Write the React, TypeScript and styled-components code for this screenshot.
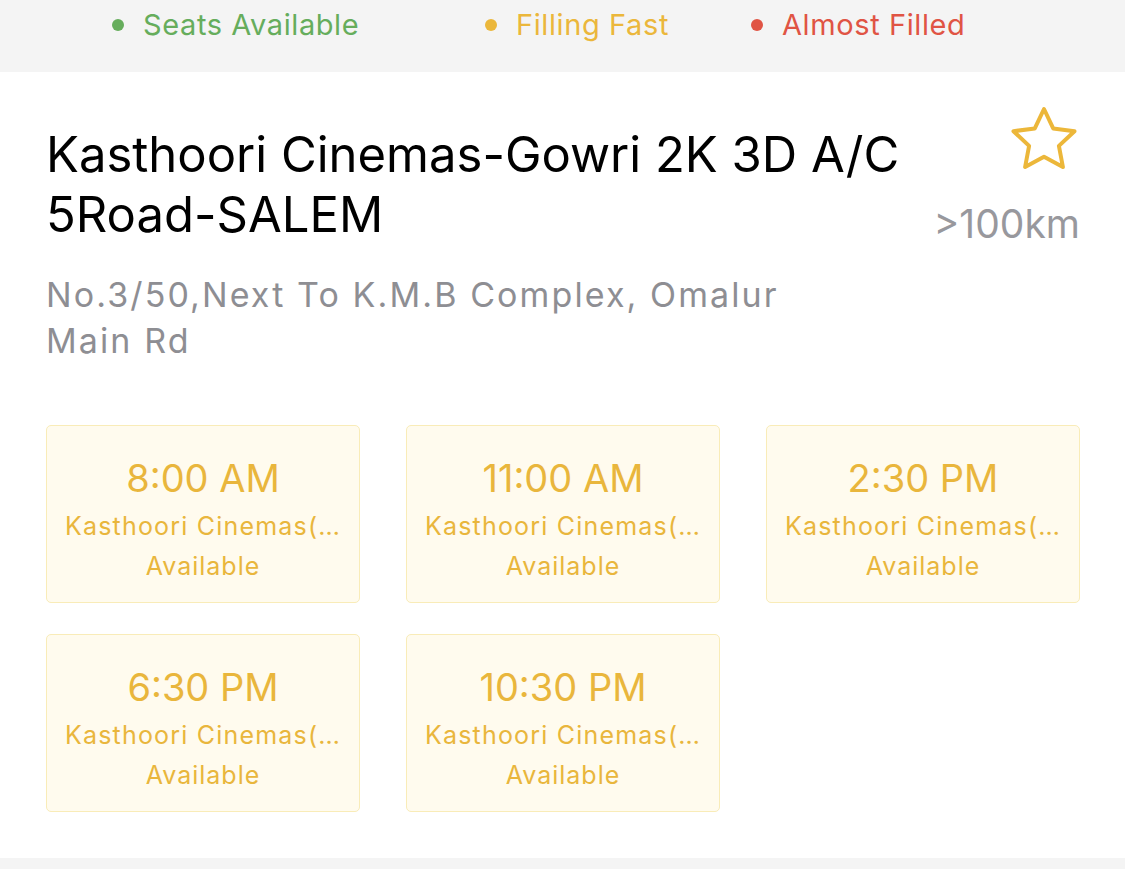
import React from "react";
import styled, { createGlobalStyle } from "styled-components";

const GlobalStyle = createGlobalStyle`
  html, body {
    margin: 0;
    padding: 0;
    background: #f4f4f4;
  }
  body {
    font-family: Inter, "Noto Sans", sans-serif;
  }
`;

const Page = styled.div`
  width: 1125px;
  height: 869px;
  overflow: hidden;
  background: #f4f4f4;
  display: flex;
  flex-direction: column;
`;

const Legend = styled.div`
  height: 72px;
  flex-shrink: 0;
  display: flex;
  align-items: flex-start;
  padding: 7px 0 0 112px;
  box-sizing: border-box;
`;

const LegendItem = styled.div<{ $color: string; $width: number }>`
  display: flex;
  align-items: center;
  width: ${(p) => p.$width}px;
  color: ${(p) => p.$color};
  font-size: 29px;
  line-height: 36px;
  letter-spacing: 0.6px;
  &::before {
    content: "";
    flex-shrink: 0;
    width: 12px;
    height: 12px;
    border-radius: 50%;
    background: ${(p) => p.$color};
    margin-right: 19px;
  }
`;

const Card = styled.div`
  background: #ffffff;
  height: 786px;
  flex-shrink: 0;
  padding: 33px 45px 0 46px;
  box-sizing: border-box;
`;

const Header = styled.div`
  display: flex;
  justify-content: space-between;
  align-items: flex-start;
`;

const Title = styled.h1`
  margin: 20px 0 0;
  font-size: 49px;
  font-weight: 400;
  line-height: 60px;
  color: #000;
  width: 880px;
`;

const Side = styled.div`
  display: flex;
  flex-direction: column;
  align-items: flex-end;
`;

const Distance = styled.div`
  margin-top: 26px;
  font-size: 39px;
  color: #98989d;
  line-height: 46px;
`;

const Address = styled.p`
  margin: 25px 0 0;
  font-size: 34px;
  line-height: 46px;
  color: #8e8e93;
  width: 760px;
  letter-spacing: 2.1px;
`;

const Grid = styled.div`
  margin-top: 61px;
  display: grid;
  grid-template-columns: repeat(3, 314px);
  column-gap: 46px;
  row-gap: 31px;
`;

const Slot = styled.div`
  height: 178px;
  box-sizing: border-box;
  background: #fffbee;
  border: 1.5px solid #f9ecb8;
  border-radius: 5px;
  display: flex;
  flex-direction: column;
  align-items: center;
  padding-top: 30px;
  color: #e9b63c;
`;

const Time = styled.div`
  font-size: 38px;
  line-height: 44px;
`;

const Place = styled.div`
  margin-top: 8px;
  font-size: 25px;
  line-height: 36px;
  white-space: nowrap;
  letter-spacing: 1.2px;
`;

const Status = styled.div`
  margin-top: 3px;
  font-size: 25px;
  line-height: 38px;
  letter-spacing: 1px;
`;

const StarIcon = () => (
  <svg width="72" height="70" viewBox="0 0 72 70" fill="none">
    <path
      d="M36 4 L45.2 23.4 L66.5 26.2 L50.9 40.9 L54.9 62 L36 51.7 L17.1 62 L21.1 40.9 L5.5 26.2 L26.8 23.4 Z"
      stroke="#ecb73a"
      strokeWidth="4"
      strokeLinejoin="round"
    />
  </svg>
);

const legend = [
  { label: "Seats Available", color: "#66ad5c", width: 373 },
  { label: "Filling Fast", color: "#ebb73b", width: 266 },
  { label: "Almost Filled", color: "#e05444", width: 260 },
];

const times = ["8:00 AM", "11:00 AM", "2:30 PM", "6:30 PM", "10:30 PM"];

export default function App() {
  return (
    <>
      <GlobalStyle />
      <Page>
        <Legend>
          {legend.map((l) => (
            <LegendItem key={l.label} $color={l.color} $width={l.width}>
              {l.label}
            </LegendItem>
          ))}
        </Legend>
        <Card>
          <Header>
            <Title>Kasthoori Cinemas-Gowri 2K 3D A/C 5Road-SALEM</Title>
            <Side>
              <StarIcon />
              <Distance>&gt;100km</Distance>
            </Side>
          </Header>
          <Address>No.3/50,Next To K.M.B Complex, Omalur Main Rd</Address>
          <Grid>
            {times.map((t) => (
              <Slot key={t}>
                <Time>{t}</Time>
                <Place>Kasthoori Cinemas(…</Place>
                <Status>Available</Status>
              </Slot>
            ))}
          </Grid>
        </Card>
      </Page>
    </>
  );
}
